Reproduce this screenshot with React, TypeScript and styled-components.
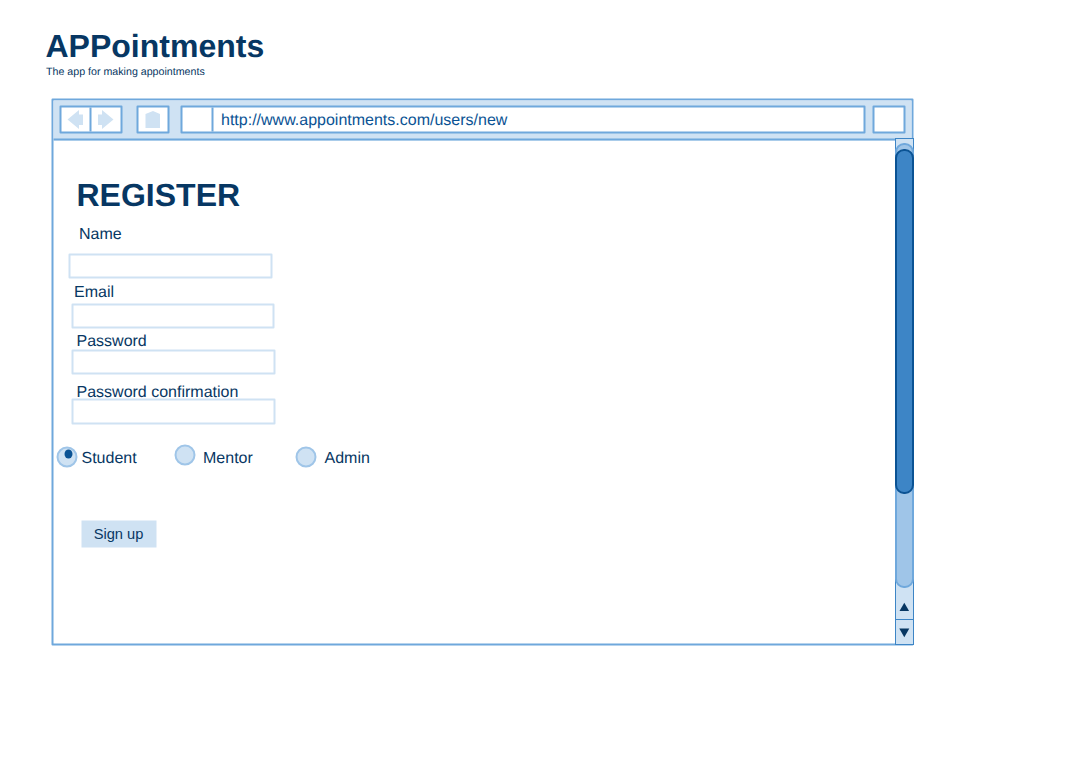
import React from "react";
import styled, { createGlobalStyle } from "styled-components";

const c = {
  pale: "#cfe2f3",
  light: "#9fc5e8",
  line: "#6fa8dc",
  mid: "#3d85c6",
  strong: "#0b5394",
  navy: "#073763",
};

const GlobalStyle = createGlobalStyle`
  *, *::before, *::after { box-sizing: border-box; }
  body {
    margin: 0;
    background: #fff;
    color: ${c.navy};
    font-family: "Liberation Sans", Arial, sans-serif;
    font-size: 16px;
    line-height: 18px;
    text-rendering: geometricPrecision;
  }
`;

const Page = styled.div`
  width: 1084px;
  height: 768px;
  padding: 28px 0 0 45.5px;
  overflow: hidden;
`;

const Brand = styled.h1`
  margin: 0;
  font-size: 32px;
  line-height: 36px;
`;

const Tagline = styled.p`
  margin: 2px 0 0 0.5px;
  font-size: 10.67px;
  line-height: 12px;
`;

const Browser = styled.section`
  display: flex;
  flex-direction: column;
  width: 862px;
  height: 547px;
  margin: 21px 0 0 6.5px;
  border: 2px solid ${c.line};
  border-radius: 1px;
  transform: translate(-0.5px, -0.5px);
`;

const Toolbar = styled.header`
  display: flex;
  flex: none;
  height: 40px;
  padding: 5px 8px 0 6px;
  background: ${c.pale};
  border-bottom: 2px solid ${c.line};
`;

const Box = styled.div<{ $width: number; $gap?: number }>`
  display: flex;
  flex: none;
  width: ${(p) => p.$width}px;
  height: 28px;
  margin-left: ${(p) => p.$gap ?? 0}px;
  background: #fff;
  border: 2px solid ${c.line};
  border-radius: 1px;
`;

const Cell = styled.div<{ $width: number }>`
  flex: none;
  width: ${(p) => p.$width}px;
  border-right: 2px solid ${c.line};
`;

const Url = styled.span`
  padding: 4px 0 0 7.5px;
  color: ${c.strong};
`;

const Glyph = styled.svg`
  display: block;
  fill: ${c.pale};
`;

const Body = styled.div`
  display: flex;
  flex: 1;
  min-height: 0;
`;

const Form = styled.form`
  flex: 1;
  padding: 35px 0 0;
`;

const Title = styled.h2`
  margin: 0 0 0 23px;
  font-size: 32px;
  line-height: 38px;
`;

const Label = styled.label<{ $left: number; $top: number }>`
  display: block;
  margin: ${(p) => p.$top}px 0 0 ${(p) => p.$left}px;
`;

const Input = styled.input<{ $left: number; $top: number; $width?: number; $height?: number }>`
  display: block;
  width: ${(p) => p.$width ?? 204}px;
  height: ${(p) => p.$height ?? 25}px;
  margin: ${(p) => p.$top}px 0 0 ${(p) => p.$left}px;
  padding: 0 6px;
  background: #fff;
  border: 2px solid ${c.pale};
  border-radius: 1px;
  outline: 0;
`;

const Roles = styled.div`
  display: flex;
  height: 24px;
  margin: 20px 0 0 3px;
`;

const Role = styled.label<{ $width: number; $gap: number }>`
  display: flex;
  gap: ${(p) => p.$gap}px;
  width: ${(p) => p.$width}px;
  line-height: 18px;
  padding-top: 5px;
`;

const Radio = styled.span<{ $lift: number }>`
  flex: none;
  width: 21px;
  height: 21px;
  margin-top: ${(p) => p.$lift}px;
  padding: 1px 0 0 6px;
  background: ${c.pale};
  border: 2px solid ${c.light};
  border-radius: 50%;
`;

const Dot = styled.span`
  display: block;
  width: 8px;
  height: 9px;
  background: ${c.strong};
  border-radius: 50%;
`;

const Submit = styled.button`
  display: block;
  width: 75px;
  height: 27px;
  margin: 52px 0 0 27.5px;
  padding: 0;
  color: ${c.navy};
  font: 14.67px/27px "Liberation Sans", Arial, sans-serif;
  background: ${c.pale};
  border: 0;
`;

const Scrollbar = styled.aside`
  display: flex;
  flex: none;
  flex-direction: column;
  width: 19px;
  margin: -3px -2px -1px 0;
  background: ${c.pale};
  border: 1px solid ${c.mid};
  transform: translate(0.5px, 0.5px);
`;

const Track = styled.div`
  flex: none;
  height: 445px;
  margin: 4px -1px 0;
  padding-top: 4px;
  background: ${c.light};
  border: 2px solid ${c.line};
  border-radius: 9px;
`;

const Thumb = styled.div`
  height: 345px;
  margin: 0 -2px;
  background: ${c.mid};
  border: 2px solid ${c.strong};
  border-radius: 9px;
`;

const Arrow = styled.div<{ $height: number; $line?: boolean }>`
  flex: none;
  height: ${(p) => p.$height}px;
  border-top: ${(p) => (p.$line ? `1px solid ${c.mid}` : "0")};
  svg {
    display: block;
    fill: ${c.navy};
  }
`;

export default function App() {
  return (
    <Page>
      <GlobalStyle />
      <Brand>APPointments</Brand>
      <Tagline>The app for making appointments</Tagline>
      <Browser>
        <Toolbar>
          <Box $width={63}>
            <Cell $width={30}>
              <Glyph width="28" height="24">
                <path d="M6 12 17.500 2.500v4.500h4v10.500h-4V21.500z" />
              </Glyph>
            </Cell>
            <Glyph width="28" height="24">
              <path d="M22 12 10.500 2.500v4.500H6.500v10.500h4V21.500z" />
            </Glyph>
          </Box>
          <Box $width={33} $gap={14}>
            <Glyph width="29" height="24">
              <path d="M7 6.500 14.500 3.500l7 3V20.500H7z" />
            </Glyph>
          </Box>
          <Box $width={685} $gap={11}>
            <Cell $width={31} />
            <Url>http://www.appointments.com/users/new</Url>
          </Box>
          <Box $width={33} $gap={7} />
        </Toolbar>
        <Body>
          <Form>
            <Title>REGISTER</Title>
            <Label $left={25.5} $top={12}>Name</Label>
            <Input $left={15} $top={10} />
            <Label $left={20.5} $top={5}>Email</Label>
            <Input $left={18} $top={2} $width={203} />
            <Label $left={23} $top={4}>Password</Label>
            <Input $left={18} $top={-1} />
            <Label $left={23} $top={9}>Password confirmation</Label>
            <Input $left={18} $top={-3} $height={26} />
            <Roles>
              <Role $width={118} $gap={4}>
                <Radio $lift={-3}>
                  <Dot />
                </Radio>
                Student
              </Role>
              <Role $width={121} $gap={7.5}>
                <Radio $lift={-5} />
                Mentor
              </Role>
              <Role $width={100} $gap={8}>
                <Radio $lift={-3} />
                Admin
              </Role>
            </Roles>
            <Submit type="button">Sign up</Submit>
          </Form>
          <Scrollbar>
            <Track>
              <Thumb />
            </Track>
            <Arrow $height={31}>
              <svg width="17" height="31">
                <path d="M8.300 14.800 13.100 23H3.500z" />
              </svg>
            </Arrow>
            <Arrow $height={25} $line>
              <svg width="17" height="24">
                <path d="M8.300 17.200 13.300 8.500H3.300z" />
              </svg>
            </Arrow>
          </Scrollbar>
        </Body>
      </Browser>
    </Page>
  );
}
